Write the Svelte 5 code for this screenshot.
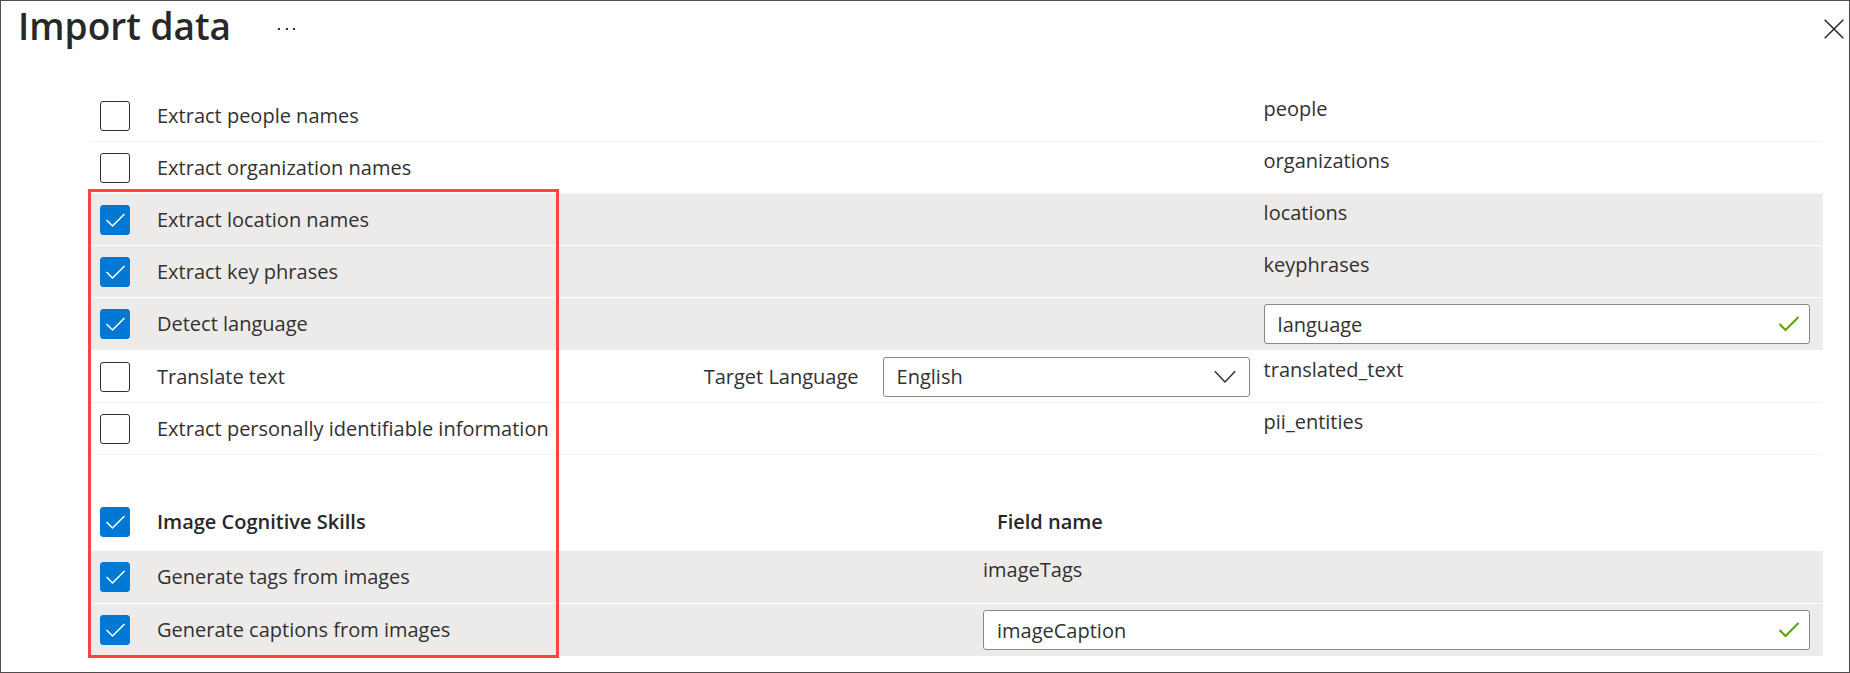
<script>
  let textSkills = $state([
    { id: 'people', label: 'Extract people names', field: 'people', checked: false },
    { id: 'organizations', label: 'Extract organization names', field: 'organizations', checked: false },
    { id: 'locations', label: 'Extract location names', field: 'locations', checked: true },
    { id: 'keyphrases', label: 'Extract key phrases', field: 'keyphrases', checked: true },
    { id: 'language', label: 'Detect language', field: 'language', checked: true, editable: true },
    { id: 'translate', label: 'Translate text', field: 'translated_text', checked: false, target: true },
    { id: 'pii', label: 'Extract personally identifiable information', field: 'pii_entities', checked: false }
  ]);
  let imageSkills = $state([
    { id: 'tags', label: 'Generate tags from images', field: 'imageTags', checked: true },
    { id: 'captions', label: 'Generate captions from images', field: 'imageCaption', checked: true, editable: true }
  ]);
  let allImages = $state(true);
  let targetLanguage = $state('English');
</script>

{#snippet fieldCell(skill)}
  <td class="field" class:editable={skill.editable}>
    {#if skill.editable}
      <div class="textbox">
        <input type="text" aria-label={skill.label} bind:value={skill.field} />
        <svg width="22" height="16" viewBox="0 0 22 16" aria-hidden="true">
          <path d="M1.5 8 L7.5 14 L20.5 1" />
        </svg>
      </div>
    {:else}
      <span class="name">{skill.field}</span>
    {/if}
  </td>
{/snippet}

{#snippet tick()}
  <svg class="tick" width="30" height="30" viewBox="0 0 30 30" aria-hidden="true">
    <path d="M6.5 15 L12.5 21 L24.5 9" />
  </svg>
{/snippet}

<main class="blade">
  <header>
    <h1>Import data</h1>
    <button type="button" class="more" aria-label="More">
      <svg width="20" height="4" viewBox="0 0 20 4">
        <rect x="1" y="1" width="2" height="2" />
        <rect x="9" y="1" width="2" height="2" />
        <rect x="16" y="1" width="2" height="2" />
      </svg>
    </button>
    <button type="button" class="close" aria-label="Close">
      <svg width="20" height="20" viewBox="0 0 20 20">
        <path d="M0.7 0.7 L19.3 19.3 M19.3 0.7 L0.7 19.3" />
      </svg>
    </button>
  </header>

  <div class="skills">
    <table class="text-skills">
      <colgroup>
        <col class="c-check" />
        <col class="c-label" />
        <col />
        <col class="c-field" />
      </colgroup>
      <tbody>
        {#each textSkills as skill (skill.id)}
          <tr class:selected={skill.checked}>
            <td>
              <span class="box">
                <input type="checkbox" id={skill.id} bind:checked={skill.checked} />
                {@render tick()}
              </span>
            </td>
            <td><label for={skill.id}>{skill.label}</label></td>
            <td>
              {#if skill.target}
                <div class="target">
                  <label for="target-language">Target Language</label>
                  <span class="dropdown">
                    <select id="target-language" bind:value={targetLanguage}>
                      <option>English</option>
                    </select>
                    <svg width="22" height="14" viewBox="0 0 22 14" aria-hidden="true">
                      <path d="M0.8 1.2 L11 12 L21.2 1.2" />
                    </svg>
                  </span>
                </div>
              {/if}
            </td>
            {@render fieldCell(skill)}
          </tr>
        {/each}
      </tbody>
    </table>

    <table class="image-skills">
      <colgroup>
        <col class="c-check" />
        <col />
        <col class="c-field" />
      </colgroup>
      <thead>
        <tr>
          <th>
            <span class="box">
              <input type="checkbox" id="all-images" bind:checked={allImages} />
              {@render tick()}
            </span>
          </th>
          <th><label for="all-images">Image Cognitive Skills</label></th>
          <th class="field-heading">Field name</th>
        </tr>
      </thead>
      <tbody>
        {#each imageSkills as skill (skill.id)}
          <tr class:selected={skill.checked}>
            <td>
              <span class="box">
                <input type="checkbox" id={skill.id} bind:checked={skill.checked} />
                {@render tick()}
              </span>
            </td>
            <td><label for={skill.id}>{skill.label}</label></td>
            {@render fieldCell(skill)}
          </tr>
        {/each}
      </tbody>
    </table>
    <div class="callout"></div>
  </div>
</main>

<style>
  :global(body) {
    margin: 0;
    background: #fff;
  }

  .blade {
    box-sizing: border-box;
    min-height: 100vh;
    border: 1px solid #504b4d;
    font-family: 'Segoe UI', 'Open Sans', 'Noto Sans', sans-serif;
    font-size: 20px;
    line-height: 28px;
    color: #323130;
  }

  header {
    display: flex;
    align-items: center;
    height: 56px;
    padding: 0 5px 0 17px;
  }

  h1 {
    margin: 0;
    padding-bottom: 6px;
    font-size: 37px;
    line-height: 50px;
    font-weight: 600;
    color: #292827;
  }

  button {
    display: flex;
    padding: 0;
    border: 0;
    background: none;
    cursor: pointer;
  }

  .more {
    margin-left: 46px;
  }

  .more svg {
    fill: #323130;
  }

  .close {
    margin-left: auto;
  }

  .close path {
    fill: none;
    stroke: #292827;
    stroke-width: 1.5;
  }

  .skills {
    position: relative;
    margin: 33px 26px 0 90px;
  }

  table {
    width: 100%;
    table-layout: fixed;
    border-collapse: separate;
    border-spacing: 0;
  }

  .c-check {
    width: 66px;
  }

  .c-label {
    width: 24%;
  }

  .text-skills .c-field {
    width: 32.3%;
  }

  .image-skills .c-field {
    width: 48.5%;
  }

  td,
  th {
    box-sizing: border-box;
    height: 52px;
    padding: 0;
    border-bottom: 1px solid #f3f2f1;
    text-align: left;
    white-space: nowrap;
  }

  .image-skills {
    margin-top: 38px;
  }

  .image-skills td {
    height: 53px;
  }

  th {
    height: 58px;
    border-bottom: 0;
    font-weight: 600;
    color: #292827;
  }

  .selected td {
    background: #edebe9;
    border-bottom-color: #fff;
  }

  .box {
    display: grid;
    width: 30px;
    margin-left: 9px;
  }

  .box input,
  .tick {
    grid-area: 1 / 1;
  }

  .box input {
    appearance: none;
    box-sizing: border-box;
    width: 30px;
    height: 30px;
    margin: 0;
    border: 1px solid #323130;
    border-radius: 3px;
    background: #fff;
  }

  .box input:checked {
    border-color: #0078d4;
    background: #0078d4;
  }

  .tick {
    visibility: hidden;
    pointer-events: none;
    fill: none;
    stroke: #fff;
    stroke-width: 1.5;
  }

  .box input:checked + .tick {
    visibility: visible;
  }

  .target {
    display: flex;
    align-items: center;
    justify-content: flex-end;
    gap: 24px;
    margin-right: 14px;
  }

  .dropdown,
  .textbox {
    display: grid;
    align-items: center;
  }

  .dropdown {
    width: 367px;
  }

  .dropdown > *,
  .textbox > * {
    grid-area: 1 / 1;
  }

  .dropdown svg,
  .textbox svg {
    justify-self: end;
    pointer-events: none;
    fill: none;
  }

  .dropdown svg {
    margin-right: 14px;
    stroke: #323130;
    stroke-width: 1.5;
  }

  .textbox svg {
    margin-right: 10px;
    stroke: #57a300;
    stroke-width: 2;
  }

  select,
  .textbox input {
    appearance: none;
    box-sizing: border-box;
    width: 100%;
    height: 40px;
    margin: 0;
    padding: 0 13px;
    border: 1px solid #8a8886;
    border-radius: 3px;
    background: #fff;
    font: inherit;
    color: inherit;
  }

  .field {
    vertical-align: top;
    padding: 5px 13px 0 0;
  }

  .editable {
    padding: 6px 13px 6px 0;
  }

  .name {
    display: block;
  }

  .field-heading {
    padding-left: 14px;
  }

  .callout {
    position: absolute;
    box-sizing: border-box;
    top: 99px;
    bottom: -1px;
    left: -3px;
    width: 471px;
    border: 3px solid #ff4343;
    pointer-events: none;
  }
</style>
